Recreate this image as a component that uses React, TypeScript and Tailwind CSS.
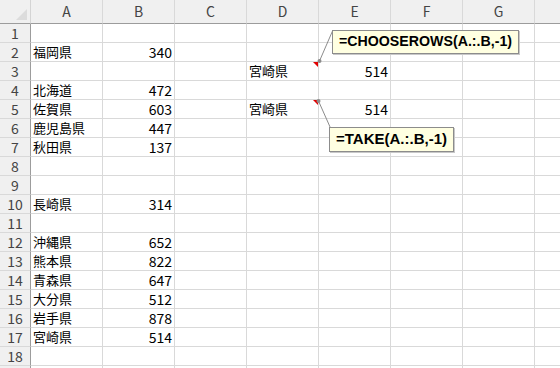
import React from "react";

const COLS = ["A", "B", "C", "D", "E", "F", "G", "H"];
const ROW_COUNT = 18;

type Cell = { text: string; align?: "left" | "right"; note?: boolean };

// sheet contents keyed by "A2" style address
const cells: Record<string, Cell> = {
  A2: { text: "福岡県" },
  B2: { text: "340", align: "right" },
  A4: { text: "北海道" },
  B4: { text: "472", align: "right" },
  A5: { text: "佐賀県" },
  B5: { text: "603", align: "right" },
  A6: { text: "鹿児島県" },
  B6: { text: "447", align: "right" },
  A7: { text: "秋田県" },
  B7: { text: "137", align: "right" },
  A10: { text: "長崎県" },
  B10: { text: "314", align: "right" },
  A12: { text: "沖縄県" },
  B12: { text: "652", align: "right" },
  A13: { text: "熊本県" },
  B13: { text: "822", align: "right" },
  A14: { text: "青森県" },
  B14: { text: "647", align: "right" },
  A15: { text: "大分県" },
  B15: { text: "512", align: "right" },
  A16: { text: "岩手県" },
  B16: { text: "878", align: "right" },
  A17: { text: "宮崎県" },
  B17: { text: "514", align: "right" },
  D3: { text: "宮崎県", note: true },
  E3: { text: "514", align: "right" },
  D5: { text: "宮崎県", note: true },
  E5: { text: "514", align: "right" },
};

const font = {
  fontFamily: '"Noto Sans CJK JP", "Noto Sans", sans-serif',
};

function Corner() {
  return (
    <div className="relative h-[24px] w-[31px] shrink-0 border-r border-b border-r-[#d4d4d4] border-b-[#9c9c9c] bg-[#f0f0f0]">
      <div className="absolute right-[3px] bottom-[3px] h-0 w-0 border-b-[11px] border-l-[11px] border-b-[#dcdcdc] border-l-transparent" />
    </div>
  );
}

function ColHeader({ name }: { name: string }) {
  return (
    <div className="flex h-[24px] w-[72px] shrink-0 items-center justify-center border-r border-b border-r-[#d9d9d9] border-b-[#9c9c9c] bg-[#f0f0f0] text-[14px] text-[#444]">
      {name}
    </div>
  );
}

function RowHeader({ n }: { n?: number }) {
  return (
    <div className="flex h-[19px] w-[31px] shrink-0 items-center justify-center border-r border-b border-r-[#9c9c9c] border-b-[#d9d9d9] bg-[#f0f0f0] text-[14px] text-[#444]">
      {n}
    </div>
  );
}

function DataCell({ cell }: { cell?: Cell }) {
  return (
    <div className="relative flex h-[19px] w-[72px] shrink-0 items-center border-r border-b border-[#d9d9d9] text-[14px] text-black">
      {cell && (
        <span
          className={
            cell.align === "right"
              ? "w-full pr-[2px] text-right"
              : "w-full pl-[2px] text-left text-[13px]"
          }
        >
          {cell.text}
        </span>
      )}
      {cell?.note && (
        <div className="absolute top-0 right-0 h-0 w-0 border-t-[5px] border-l-[5px] border-t-[#e00000] border-l-transparent" />
      )}
    </div>
  );
}

function Comment({ text, className }: { text: string; className: string }) {
  return (
    <div
      className={`absolute flex items-center border border-[#8c8c8c] bg-[#ffffe1] pl-[6px] font-bold whitespace-nowrap text-black shadow-[1px_1px_0_#c8c8c8] ${className}`}
      style={{ fontFamily: '"Liberation Sans", Arial, sans-serif' }}
    >
      {text}
    </div>
  );
}

export default function App() {
  const rows = Array.from({ length: ROW_COUNT }, (_, i) => i + 1);

  return (
    <div
      className="relative h-[368px] w-[560px] overflow-hidden bg-white"
      style={font}
    >
      <div className="flex flex-col">
        <div className="flex">
          <Corner />
          {COLS.map((c) => (
            <ColHeader key={c} name={c === "H" ? "" : c} />
          ))}
        </div>
        {rows.map((r) => (
          <div key={r} className="flex">
            <RowHeader n={r} />
            {COLS.map((c) => (
              <DataCell key={c} cell={cells[`${c}${r}`]} />
            ))}
          </div>
        ))}
        {/* next row peeking in at the bottom edge */}
        <div className="flex">
          <RowHeader />
          {COLS.map((c) => (
            <DataCell key={c} />
          ))}
        </div>
      </div>

      {/* comment connectors */}
      <svg
        className="pointer-events-none absolute top-0 left-0"
        width={560}
        height={368}
      >
        <line x1={332.5} y1={31} x2={319.5} y2={61} stroke="#8c8c8c" strokeWidth={1} />
        <circle cx={319.5} cy={61} r={2} fill="#8c8c8c" />
        <line x1={318.5} y1={101} x2={330.5} y2={128} stroke="#8c8c8c" strokeWidth={1} />
        <circle cx={318.5} cy={101} r={2} fill="#8c8c8c" />
      </svg>

      <Comment
        text="=CHOOSEROWS(A.:.B,-1)"
        className="top-[30px] left-[332px] h-[24px] w-[187px] text-[14.2px]"
      />
      <Comment
        text="=TAKE(A.:.B,-1)"
        className="top-[127px] left-[329px] h-[25px] w-[125px] text-[15px]"
      />
    </div>
  );
}
